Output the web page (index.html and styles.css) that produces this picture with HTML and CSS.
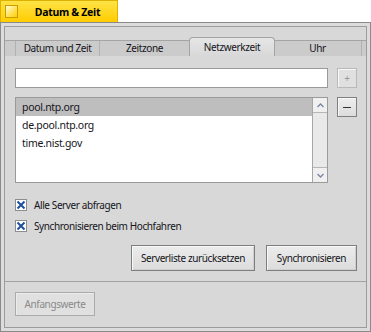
FILE: index.html
```html
<!DOCTYPE html>
<html>
<head>
    <meta name="viewport" content="width=device-width, initial-scale=1.0">
    <title>Datum &amp; Zeit</title>
    <link rel="stylesheet" href="styles.css">
</head>
<body>
    <div class="title-tab">
        <span class="close-box"></span>
        <span class="title">Datum &amp; Zeit</span>
    </div>
    <div class="window">
        <div class="frame">
            <div class="tabview">
                <div class="tabs">
                    <div class="tab tab-1">Datum und Zeit</div>
                    <div class="tab tab-2">Zeitzone</div>
                    <div class="tab tab-3 active">Netzwerkzeit</div>
                    <div class="tab tab-4">Uhr</div>
                </div>
                <div class="panel">
                    <div class="row">
                        <div class="textfield"></div>
                        <button class="small-btn disabled">+</button>
                    </div>
                    <div class="row list-row">
                        <div class="list">
                            <div class="items">
                                <div class="item selected">pool.ntp.org</div>
                                <div class="item">de.pool.ntp.org</div>
                                <div class="item">time.nist.gov</div>
                            </div>
                            <div class="scrollbar">
                                <div class="arrow">
                                    <svg width="7" height="5" viewBox="0 0 7 5"><path d="M0.5 4 L3.5 1 L6.5 4" fill="none" stroke="#7b88a3" stroke-width="1.4"/></svg>
                                </div>
                                <div class="track"></div>
                                <div class="arrow">
                                    <svg width="7" height="5" viewBox="0 0 7 5"><path d="M0.5 1 L3.5 4 L6.5 1" fill="none" stroke="#7b88a3" stroke-width="1.4"/></svg>
                                </div>
                            </div>
                        </div>
                        <button class="small-btn minus"><span class="dash"></span></button>
                    </div>
                    <div class="checks">
                        <div class="check">
                            <span class="box">
                                <svg width="10" height="10" viewBox="0 0 10 10"><path d="M1.5 1.5 L8.5 8.5 M8.5 1.5 L1.5 8.5" stroke="#1d4f9e" stroke-width="2"/></svg>
                            </span>
                            Alle Server abfragen
                        </div>
                        <div class="check">
                            <span class="box">
                                <svg width="10" height="10" viewBox="0 0 10 10"><path d="M1.5 1.5 L8.5 8.5 M8.5 1.5 L1.5 8.5" stroke="#1d4f9e" stroke-width="2"/></svg>
                            </span>
                            Synchronisieren beim Hochfahren
                        </div>
                    </div>
                    <div class="actions">
                        <button class="btn reset">Serverliste zurücksetzen</button>
                        <button class="btn sync">Synchronisieren</button>
                    </div>
                </div>
            </div>
            <div class="footer">
                <button class="btn disabled">Anfangswerte</button>
            </div>
        </div>
    </div>
</body>
</html>
```

FILE: styles.css
```css
/* Fenster im Haiku-Stil */
body {
    margin: 0;
    background: #fff;
    font-family: "Noto Sans", "DejaVu Sans", sans-serif;
    font-size: 10px;
    letter-spacing: -0.4px;
    color: #141420;
}
.title-tab {
    width: 118px;
    height: 22px;
    box-sizing: border-box;
    display: flex;
    align-items: center;
    background: linear-gradient(#ffe347, #ffcc00);
    border: 1px solid #e0b200;
    border-bottom: none;
}
.close-box {
    width: 13px;
    height: 13px;
    box-sizing: border-box;
    margin-left: 4px;
    border: 1px solid #c79d00;
    background: linear-gradient(135deg, #fffbe0, #ffe25a 55%, #ffcf00);
}
.title {
    flex: 1;
    text-align: center;
    font-weight: bold;
    font-size: 10.5px;
    letter-spacing: -0.3px;
    color: #000;
}
.window {
    height: 310px;
    box-sizing: border-box;
    border: 1px solid #8a8a8a;
    padding: 3px;
    background: #dcdcdc;
}
.frame {
    height: 100%;
    box-sizing: border-box;
    border: 1px solid #9c9c9c;
    background: #d8d8d8;
    display: flex;
    flex-direction: column;
}
.tabview {
    padding-top: 10px;
    border-bottom: 1px solid #a2a2a2;
}
.tabs {
    display: flex;
    align-items: flex-end;
    height: 19px;
    padding-left: 10px;
    background: linear-gradient(transparent 3px, #a4a4a4 3px, #a4a4a4 4px, #cbcbcb 4px);
}
.tab {
    height: 15px;
    box-sizing: border-box;
    border-right: 1px solid #b2b2b2;
    text-align: center;
    line-height: 15px;
}
.tabs .tab:first-child {
    border-left: 1px solid #b2b2b2;
}
.tab-1 { width: 85px; }
.tab-2 { width: 90px; }
.tab-3 { width: 84px; }
.tab-4 { width: 88px; }
.tab.active {
    height: 19px;
    line-height: 18px;
    border: 1px solid #a4a4a4;
    border-bottom: none;
    border-radius: 4px 4px 0 0;
    background: linear-gradient(#e6e6e6, #d8d8d8);
    margin-left: -1px;
    margin-right: -1px;
    width: 86px;
}
.panel {
    padding: 12px 9px 10px 10px;
}
.row {
    display: flex;
    gap: 9px;
    align-items: flex-start;
}
.textfield {
    flex: 1;
    height: 20px;
    box-sizing: border-box;
    border: 1px solid #9a9a9a;
    background: #fff;
}
.small-btn {
    width: 20px;
    height: 20px;
    padding: 0;
    font-family: inherit;
    font-size: 10px;
    border: 1px solid #7f7f7f;
    background: linear-gradient(#eeeeee, #dcdcdc);
    box-shadow: inset 1px 1px #f8f8f8;
    color: #222;
    display: flex;
    align-items: center;
    justify-content: center;
}
.small-btn.disabled {
    border-color: #b9b9b9;
    background: #e0e0e0;
    color: #9a9a9a;
}
.dash {
    width: 8px;
    height: 1px;
    background: #333;
}
.list-row {
    margin-top: 9px;
}
.list {
    flex: 1;
    height: 86px;
    box-sizing: border-box;
    border: 1px solid #9a9a9a;
    background: #fff;
    display: flex;
}
.items {
    flex: 1;
}
.item {
    height: 18px;
    line-height: 19px;
    padding-left: 6px;
    font-size: 10.5px;
    letter-spacing: -0.3px;
}
.item.selected {
    background: #bebebe;
}
.scrollbar {
    width: 14px;
    border-left: 1px solid #a6a6a6;
    background: #ececec;
    display: flex;
    flex-direction: column;
}
.arrow {
    height: 14px;
    display: flex;
    align-items: center;
    justify-content: center;
    background: #f0f0f0;
}
.arrow:first-child {
    border-bottom: 1px solid #b6b6b6;
}
.arrow:last-child {
    border-top: 1px solid #b6b6b6;
}
.track {
    flex: 1;
    background: #e9e9e9;
}
.checks {
    margin-top: 11px;
}
.check {
    height: 21px;
    display: flex;
    align-items: center;
    gap: 7px;
}
.box {
    width: 12px;
    height: 12px;
    box-sizing: border-box;
    border: 1px solid #8d8d8d;
    background: #fff;
    display: flex;
    align-items: center;
    justify-content: center;
}
.actions {
    margin-top: 9px;
    display: flex;
    justify-content: flex-end;
    gap: 11px;
}
.btn {
    height: 26px;
    padding: 0 6px;
    font-family: inherit;
    font-size: 10px;
    letter-spacing: -0.4px;
    color: #141420;
    border: 1px solid #7e7e7e;
    background: linear-gradient(#ececec, #dcdcdc);
    box-shadow: inset 1px 1px #f8f8f8, inset -1px -1px #cfcfcf;
}
.btn.reset { width: 124px; }
.btn.sync { width: 91px; }
.footer {
    padding: 10px;
}
.btn.disabled {
    height: 24px;
    width: 80px;
    color: #8a8a8a;
    border-color: #ababab;
    background: #e0e0e0;
    box-shadow: inset 1px 1px #ececec;
}
```
